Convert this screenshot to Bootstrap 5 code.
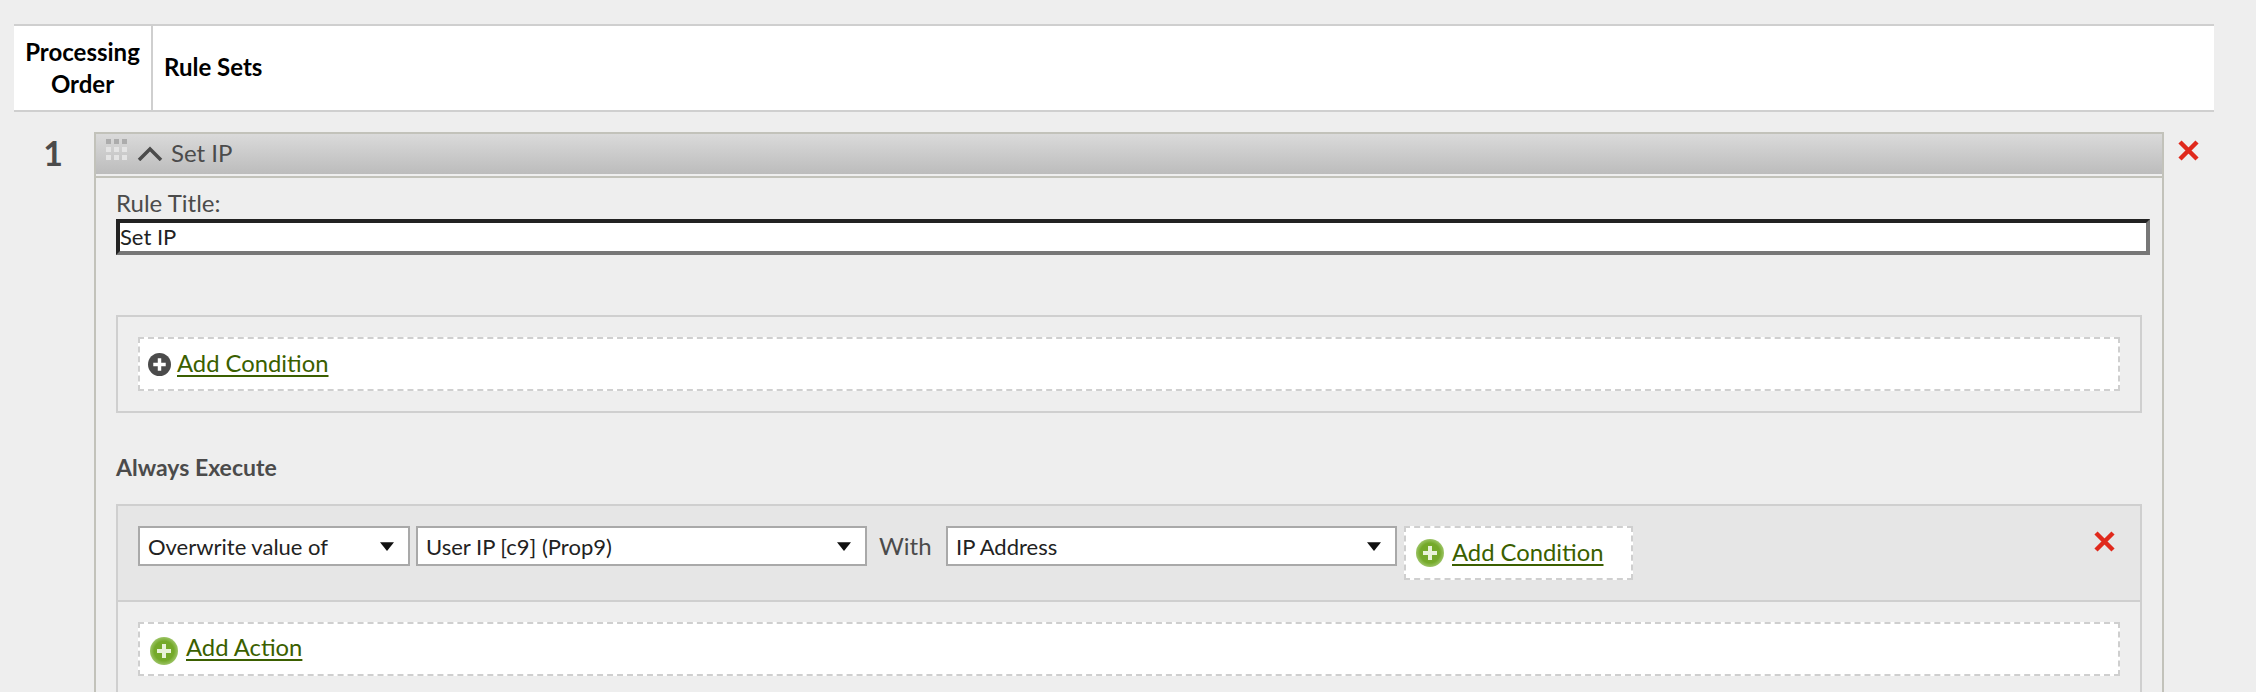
<!DOCTYPE html>
<html lang="en">
<head>
    <meta charset="UTF-8">
    <meta name="viewport" content="width=device-width, initial-scale=1.0">
    <title>Processing Rules</title>
    <link href="https://cdn.jsdelivr.net/npm/bootstrap@5.3.0/dist/css/bootstrap.min.css" rel="stylesheet">
    <style>
        html, body {
            height: 692px;
            overflow: hidden;
        }
        body {
            background: #eeeeee;
            color: #4b4b4b;
            font-family: "Lato", "Liberation Sans", sans-serif;
            font-size: 24px;
            padding: 24px 42px 0 14px;
        }
        /* header strip */
        .rules-head {
            height: 88px;
            background: #fff;
            color: #000;
            font-weight: 700;
            line-height: 32px;
            border-top: 2px solid #cfcfcf;
            border-bottom: 2px solid #cfcfcf;
        }
        .head-order {
            width: 139px;
            border-right: 2px solid #cfcfcf;
            text-align: center;
        }
        .head-sets {
            padding: 0 0 2px 11px;
        }
        /* rule row */
        .rule-row {
            margin-top: 20px;
        }
        .rule-num {
            width: 80px;
            padding-right: 2px;
            padding-top: 1px;
            text-align: center;
            font-size: 34px;
            font-weight: 700;
            line-height: 40px;
        }
        .rule-panel {
            width: 2070px;
            border: 2px solid #c2c2ba;
            border-bottom: 0;
        }
        .rule-bar {
            height: 42px;
            padding: 0 0 2px 10px;
            background: linear-gradient(#dadada, #bcbcbc);
            border-bottom: 2px solid #eeeeee;
            box-shadow: 0 2px 0 #c2c2ba;
        }
        .bar-grip {
            margin-bottom: 6px;
        }
        .bar-chevron {
            margin-left: 9px;
        }
        .rule-bar-title {
            margin-left: 8px;
        }
        .rule-body {
            padding: 0 20px;
            margin-top: 2px;
        }
        .title-label {
            margin: 0;
            padding-top: 10px;
            padding-bottom: 1px;
            line-height: 30px;
            display: block;
        }
        .title-input.form-control {
            display: block;
            width: 2034px;
            height: 36px;
            padding: 0 0 2px;
            border-width: 4px;
            border-style: solid;
            border-color: #222 #777 #777 #222;
            border-radius: 0;
            box-shadow: none;
            color: #222;
            font-size: 22px;
            line-height: 26px;
        }
        .cond-box {
            margin-top: 60px;
            padding: 20px;
            border: 2px solid #cfcfcf;
        }
        .dash-slot {
            height: 54px;
            padding-left: 10px;
            padding-bottom: 2px;
            background: #fff;
            border: 2px dashed #cfcfcf;
        }
        .dash-slot-tight {
            padding-left: 8px;
            padding-bottom: 0;
        }
        .icon-gap {
            margin-right: 6px;
        }
        .add-link {
            color: #3b5f00;
            font-size: 23.8px;
            text-decoration: underline;
            text-underline-offset: 3px;
        }
        .add-link:hover {
            color: #2d4a00;
        }
        .exec-title {
            margin: 39px 0 0;
            height: 52px;
            line-height: 30px;
            font-size: 23px;
            font-weight: 700;
        }
        .action-box {
            border: 2px solid #cfcfcf;
            border-bottom: 0;
            height: 188px;
        }
        .action-head {
            height: 96px;
            padding: 20px 20px 0;
            background: #e6e6e6;
            border-bottom: 2px solid #cfcfcf;
        }
        .action-select.form-select {
            height: 40px;
            padding: 0 30px 0 8px;
            border: 2px solid #a9a9a9;
            border-radius: 0;
            background-color: #fff;
            background-image: url("data:image/svg+xml,%3csvg xmlns='http://www.w3.org/2000/svg' viewBox='0 0 16 10'%3e%3cpath fill='%23111' d='M0 0h16L8 10z'/%3e%3c/svg%3e");
            background-position: right 14px center;
            background-size: 14px 9px;
            color: #222;
            font-size: 22px;
            box-shadow: none;
        }
        .sel-op { width: 272px; }
        .sel-var { width: 451px; margin-left: 6px; }
        .sel-src { width: 451px; }
        .with-label {
            width: 79px;
            height: 40px;
            padding-left: 12px;
            line-height: 40px;
        }
        .cond-slot {
            width: 229px;
            height: 54px;
            margin-left: 7px;
            padding-left: 10px;
            background: #fff;
            border: 2px dashed #cfcfcf;
        }
        .del-action {
            margin-left: auto;
            margin-top: 5px;
            margin-right: 5px;
        }
        .del-rule {
            margin: 8px 0 0 14px;
        }
        .action-foot {
            padding: 20px 20px 0;
        }
        .add-action-icon {
            margin-top: 6px;
        }
    </style>
</head>
<body>
    <div class="rules-head d-flex">
        <div class="head-order d-flex align-items-center justify-content-center">Processing<br>Order</div>
        <div class="head-sets d-flex align-items-center">Rule Sets</div>
    </div>

    <div class="rule-row d-flex">
        <div class="rule-num">1</div>
        <div class="rule-panel">
            <div class="rule-bar d-flex align-items-center">
                <svg class="bar-grip" width="22" height="22" viewBox="0 0 22 22" fill="url(#gripFill)">
                    <defs>
                        <linearGradient id="gripFill" gradientUnits="userSpaceOnUse" x1="0" y1="0" x2="0" y2="22"><stop offset="0.25" stop-color="#acacac"/><stop offset="0.35" stop-color="#e4e4e4"/><stop offset="1" stop-color="#e4e4e4"/></linearGradient>
                    </defs>
                    <rect x="0" y="0" width="5" height="5"/><rect x="8" y="0" width="5" height="5"/><rect x="16" y="0" width="5" height="5"/>
                    <rect x="0" y="8" width="5" height="5"/><rect x="8" y="8" width="5" height="5"/><rect x="16" y="8" width="5" height="5"/>
                    <rect x="0" y="16" width="5" height="5"/><rect x="8" y="16" width="5" height="5"/><rect x="16" y="16" width="5" height="5"/>
                </svg>
                <svg class="bar-chevron" width="26" height="16" viewBox="0 0 26 16" fill="none" stroke="#4b4b4b" stroke-width="3.5">
                    <path d="M2 15 L13 4 L24 15"/>
                </svg>
                <span class="rule-bar-title">Set IP</span>
            </div>
            <div class="rule-body">
                <label class="title-label" for="ruleTitle">Rule Title:</label>
                <input class="title-input form-control" id="ruleTitle" type="text" value="Set IP">

                <div class="cond-box">
                    <div class="dash-slot dash-slot-tight d-flex align-items-center">
                        <svg class="icon-gap" width="23" height="23" viewBox="0 0 24 24">
                            <circle cx="12" cy="12" r="12" fill="#4b4b4b"/>
                            <path d="M12 5.5v13M5.5 12h13" stroke="#fff" stroke-width="3.6"/>
                        </svg>
                        <a class="add-link" href="#">Add Condition</a>
                    </div>
                </div>

                <h2 class="exec-title">Always Execute</h2>

                <div class="action-box">
                    <div class="action-head d-flex align-items-start">
                        <select class="action-select form-select sel-op">
                            <option>Overwrite value of</option>
                        </select>
                        <select class="action-select form-select sel-var">
                            <option>User IP [c9] (Prop9)</option>
                        </select>
                        <span class="with-label">With</span>
                        <select class="action-select form-select sel-src">
                            <option>IP Address</option>
                        </select>
                        <div class="cond-slot d-flex align-items-center">
                            <svg class="me-2" width="28" height="28" viewBox="0 0 28 28">
                                <defs>
                                    <radialGradient id="greenA"><stop offset="0.7" stop-color="#74a92a"/><stop offset="1" stop-color="#9cc466"/></radialGradient>
                                </defs>
                                <circle cx="14" cy="14" r="14" fill="url(#greenA)"/>
                                <path d="M14 7v14M7 14h14" stroke="#e8f2d8" stroke-width="4"/>
                            </svg>
                            <a class="add-link" href="#">Add Condition</a>
                        </div>
                        <svg class="del-action" width="21" height="21" viewBox="0 0 21 21" stroke="#e0291c" stroke-width="4.5">
                            <path d="M2 2 L19 19 M19 2 L2 19"/>
                        </svg>
                    </div>
                    <div class="action-foot">
                        <div class="dash-slot d-flex align-items-center">
                            <svg class="me-2 add-action-icon" width="28" height="28" viewBox="0 0 28 28">
                                <circle cx="14" cy="14" r="14" fill="url(#greenA)"/>
                                <path d="M14 7v14M7 14h14" stroke="#e8f2d8" stroke-width="4"/>
                            </svg>
                            <a class="add-link" href="#">Add Action</a>
                        </div>
                    </div>
                </div>
            </div>
        </div>
        <svg class="del-rule" width="21" height="21" viewBox="0 0 21 21" stroke="#e0291c" stroke-width="4.5">
            <path d="M2 2 L19 19 M19 2 L2 19"/>
        </svg>
    </div>

    <script src="https://cdn.jsdelivr.net/npm/bootstrap@5.3.0/dist/js/bootstrap.bundle.min.js"></script>
</body>
</html>
